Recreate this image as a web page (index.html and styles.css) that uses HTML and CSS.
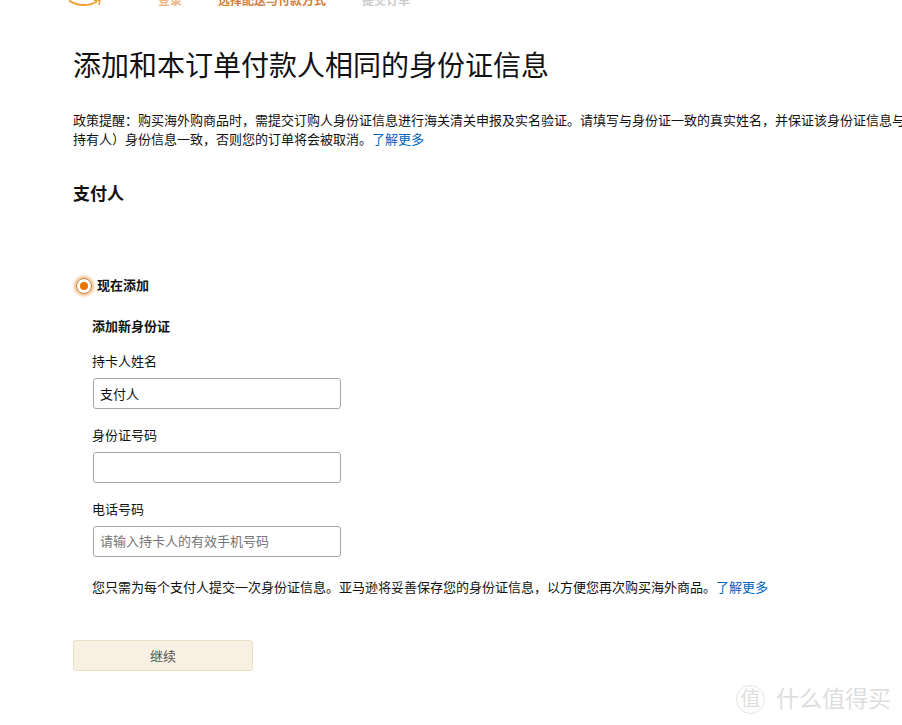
FILE: index.html
```html
<!DOCTYPE html>
<html>
<head>
  <title>添加身份证信息</title>
  <link rel="stylesheet" href="styles.css">
</head>
<body>
  <header class="top-bar">
    <svg class="logo-smile" width="34" height="8" viewBox="0 0 34 8">
      <path d="M1 0.5C8 5.5 20 7 29 1.5" fill="none" stroke="#f0a030" stroke-width="2"/>
      <path d="M26 0.5L32 0L31 5" fill="none" stroke="#f0a030" stroke-width="1.5"/>
    </svg>
    <span class="step step-done">登录</span>
    <span class="step step-active">选择配送与付款方式</span>
    <span class="step step-next">提交订单</span>
  </header>

  <main class="content">
    <h1>添加和本订单付款人相同的身份证信息</h1>

    <p class="policy">
      <span class="policy-line">政策提醒：购买海外购商品时，需提交订购人身份证信息进行海关清关申报及实名验证。请填写与身份证一致的真实姓名，并保证该身份证信息与支付人（支付卡</span>
      <span class="policy-line">持有人）身份信息一致，否则您的订单将会被取消。<a href="#">了解更多</a></span>
    </p>

    <h2>支付人</h2>

    <label class="radio-row">
      <span class="radio"><span class="radio-dot"></span></span>
      <span>现在添加</span>
    </label>

    <form class="id-form">
      <h3>添加新身份证</h3>
      <label class="field-label" for="card-name">持卡人姓名</label>
      <input class="field" id="card-name" type="text" value="支付人">
      <label class="field-label" for="id-number">身份证号码</label>
      <input class="field" id="id-number" type="text">
      <label class="field-label" for="phone">电话号码</label>
      <input class="field" id="phone" type="text" placeholder="请输入持卡人的有效手机号码">
      <p class="note">您只需为每个支付人提交一次身份证信息。亚马逊将妥善保存您的身份证信息，以方便您再次购买海外商品。<a href="#">了解更多</a></p>
    </form>

    <button class="continue-btn" type="button">继续</button>
  </main>

  <div class="watermark">
    <span class="watermark-badge">值</span>
    <span>什么值得买</span>
  </div>
</body>
</html>
```

FILE: styles.css
```css
html, body {
  height: 100%;
}

body {
  font-family: "Liberation Sans", "Noto Sans CJK SC", sans-serif;
  margin: 0;
  color: #111;
  background-color: white;
  overflow: hidden;
  position: relative;
}

a {
  color: #0066c0;
  text-decoration: none;
}

.top-bar {
  display: flex;
  align-items: flex-end;
  height: 8px;
  padding-left: 68px;
  font-size: 12px;
  line-height: 14px;
  font-weight: bold;
  overflow: hidden;
}

.logo-smile {
  margin-right: 56px;
  flex-shrink: 0;
}

.step {
  margin-right: 36px;
}

.step-done {
  color: #efb585;
}

.step-active {
  color: #d2803e;
}

.step-next {
  color: #ccc;
}

.content {
  padding-left: 73px;
}

h1 {
  font-size: 28px;
  line-height: 36px;
  font-weight: normal;
  margin: 41px 0 0;
  white-space: nowrap;
}

.policy {
  font-size: 13px;
  line-height: 19px;
  margin: 26px 0 0;
}

.policy-line {
  display: block;
  white-space: nowrap;
}

h2 {
  font-size: 17px;
  line-height: 24px;
  margin: 34px 0 0;
}

.radio-row {
  display: flex;
  align-items: center;
  font-size: 13px;
  font-weight: bold;
  line-height: 18px;
  margin: 70px 0 0 3px;
}

.radio {
  display: flex;
  align-items: center;
  justify-content: center;
  box-sizing: border-box;
  width: 16px;
  height: 16px;
  margin-right: 5px;
  border: 1px solid #c77a2e;
  border-radius: 50%;
  box-shadow: 0 0 3px 2px rgba(228, 121, 17, 0.5);
}

.radio-dot {
  width: 8px;
  height: 8px;
  border-radius: 50%;
  background-color: #e77600;
}

.id-form {
  display: flex;
  flex-direction: column;
  align-items: flex-start;
  padding-left: 20px;
}

h3 {
  font-size: 13px;
  line-height: 18px;
  margin: 23px 0 0 -1px;
}

.field-label {
  font-size: 13px;
  line-height: 18px;
  margin: 17px 0 7px -1px;
}

.field-label:nth-of-type(n+2) {
  margin-top: 18px;
}

.field {
  box-sizing: border-box;
  width: 248px;
  height: 31px;
  padding: 0 6px;
  border: 1px solid #a6a6a6;
  border-radius: 3px;
  font-family: inherit;
  font-size: 13px;
  color: #111;
}

.field::placeholder {
  color: #757575;
}

.note {
  font-size: 13px;
  line-height: 19px;
  margin: 21px 0 0 -1px;
  white-space: nowrap;
}

.continue-btn {
  display: block;
  box-sizing: border-box;
  width: 180px;
  height: 31px;
  margin-top: 43px;
  border: 1px solid #ebdfc6;
  border-radius: 3px;
  background-color: #f8f1e3;
  color: #555;
  font-family: inherit;
  font-size: 13px;
}

.watermark {
  position: absolute;
  right: 11px;
  top: 684px;
  display: flex;
  align-items: center;
  color: #dedede;
  font-size: 23px;
  line-height: 30px;
}

.watermark-badge {
  display: flex;
  align-items: center;
  justify-content: center;
  box-sizing: border-box;
  width: 29px;
  height: 29px;
  margin-right: 11px;
  border: 1px solid #e4e4e4;
  border-radius: 50%;
  font-size: 20px;
}
```
